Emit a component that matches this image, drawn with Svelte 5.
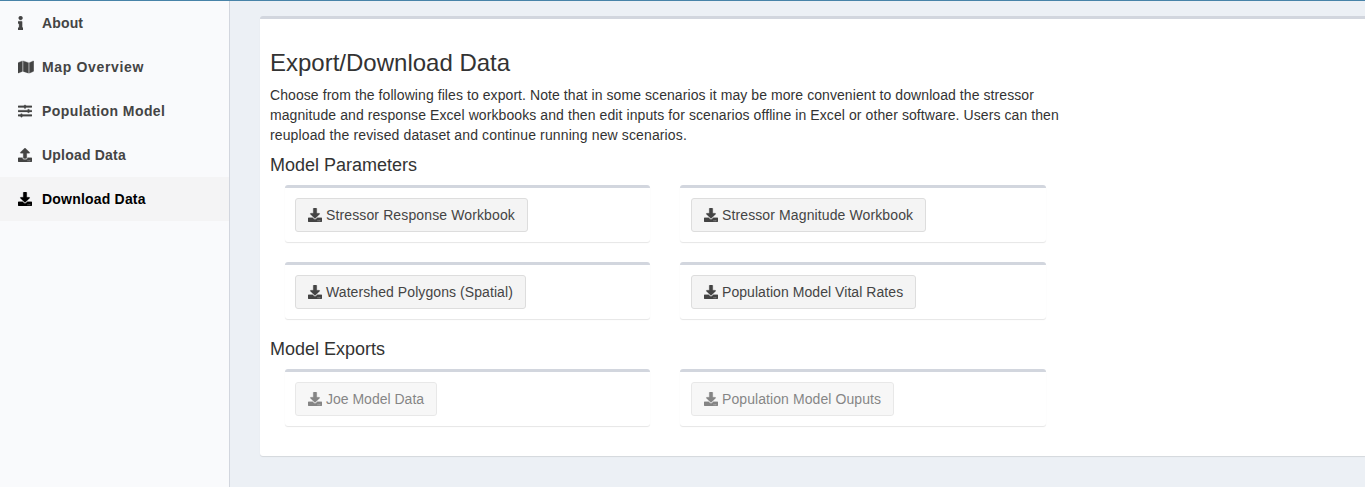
<script>
  const icons = {
    info: {
      w: 192,
      d: 'M20 424.229h20V279.771H20c-11.046 0-20-8.954-20-20V212c0-11.046 8.954-20 20-20h112c11.046 0 20 8.954 20 20v212.229h20c11.046 0 20 8.954 20 20V492c0 11.046-8.954 20-20 20H20c-11.046 0-20-8.954-20-20v-47.771c0-11.046 8.954-20 20-20zM96 0C56.235 0 24 32.235 24 72s32.235 72 72 72 72-32.235 72-72S135.764 0 96 0z'
    },
    map: {
      w: 576,
      d: 'M0 117.66v346.32c0 11.32 11.43 19.06 21.94 14.86L160 416V32L20.12 87.95A32.006 32.006 0 0 0 0 117.66zM192 416l192 64V96L192 32v384zM554.06 33.16L416 96v384l139.88-55.95A31.996 31.996 0 0 0 576 394.34V48.02c0-11.32-11.43-19.06-21.94-14.86z'
    },
    sliders: {
      w: 512,
      d: 'M496 384H160v-16c0-8.8-7.2-16-16-16h-32c-8.8 0-16 7.2-16 16v16H16c-8.8 0-16 7.2-16 16v32c0 8.8 7.2 16 16 16h80v16c0 8.8 7.2 16 16 16h32c8.8 0 16-7.2 16-16v-16h336c8.8 0 16-7.2 16-16v-32c0-8.8-7.2-16-16-16zm0-160h-80v-16c0-8.8-7.2-16-16-16h-32c-8.8 0-16 7.2-16 16v16H16c-8.8 0-16 7.2-16 16v32c0 8.8 7.2 16 16 16h336v16c0 8.8 7.2 16 16 16h32c8.8 0 16-7.2 16-16v-16h80c8.8 0 16-7.2 16-16v-32c0-8.8-7.2-16-16-16zm0-160H288V48c0-8.8-7.2-16-16-16h-32c-8.8 0-16 7.2-16 16v16H16C7.2 64 0 71.2 0 80v32c0 8.8 7.2 16 16 16h208v16c0 8.8 7.2 16 16 16h32c8.8 0 16-7.2 16-16v-16h208c8.8 0 16-7.2 16-16V80c0-8.8-7.2-16-16-16z'
    },
    upload: {
      w: 512,
      d: 'M296 384h-80c-13.3 0-24-10.7-24-24V192h-87.7c-17.8 0-26.7-21.5-14.1-34.1L242.3 5.7c7.5-7.5 19.8-7.5 27.3 0l152.2 152.2c12.6 12.6 3.7 34.1-14.1 34.1H320v168c0 13.3-10.7 24-24 24zm216-8v112c0 13.3-10.7 24-24 24H24c-13.3 0-24-10.7-24-24V376c0-13.3 10.7-24 24-24h136v8c0 30.9 25.1 56 56 56h80c30.9 0 56-25.1 56-56v-8h136c13.3 0 24 10.7 24 24zm-124 88c0-11-9-20-20-20s-20 9-20 20 9 20 20 20 20-9 20-20zm64 0c0-11-9-20-20-20s-20 9-20 20 9 20 20 20 20-9 20-20z'
    },
    download: {
      w: 512,
      d: 'M216 0h80c13.3 0 24 10.7 24 24v168h87.7c17.8 0 26.7 21.5 14.1 34.1L269.7 378.3c-7.5 7.5-19.8 7.5-27.3 0L90.1 226.1c-12.6-12.6-3.7-34.1 14.1-34.1H192V24c0-13.3 10.7-24 24-24zm296 376v112c0 13.3-10.7 24-24 24H24c-13.3 0-24-10.7-24-24V376c0-13.3 10.7-24 24-24h146.7l49 49c20.1 20.1 52.5 20.1 72.6 0l49-49H488c13.3 0 24 10.7 24 24zm-124 88c0-11-9-20-20-20s-20 9-20 20 9 20 20 20 20-9 20-20zm64 0c0-11-9-20-20-20s-20 9-20 20 9 20 20 20 20-9 20-20z'
    }
  };

  const menu = [
    { icon: 'info', label: 'About', tracking: 0.15 },
    { icon: 'map', label: 'Map Overview', tracking: 0.66 },
    { icon: 'sliders', label: 'Population Model', tracking: 0.42 },
    { icon: 'upload', label: 'Upload Data', tracking: 0.2 },
    { icon: 'download', label: 'Download Data', tracking: 0.2, active: true }
  ];

  const intro = [
    {
      text: 'Choose from the following files to export. Note that in some scenarios it may be more convenient to download the stressor',
      tracking: 0.075
    },
    {
      text: 'magnitude and response Excel workbooks and then edit inputs for scenarios offline in Excel or other software. Users can then',
      tracking: 0.088
    },
    { text: 'reupload the revised dataset and continue running new scenarios.', tracking: 0.13 }
  ];

  const sections = [
    {
      title: 'Model Parameters',
      files: [
        { name: 'Stressor Response Workbook', tracking: 0.125 },
        { name: 'Stressor Magnitude Workbook', tracking: 0.115 },
        { name: 'Watershed Polygons (Spatial)', tracking: 0.08 },
        { name: 'Population Model Vital Rates', tracking: 0.06 }
      ]
    },
    {
      title: 'Model Exports',
      disabled: true,
      files: [
        { name: 'Joe Model Data', tracking: 0 },
        { name: 'Population Model Ouputs', tracking: 0.08 }
      ]
    }
  ];
</script>

{#snippet icon(name)}
  <svg class="icon" viewBox="0 0 {icons[name].w} 512" width={(icons[name].w / 512) * 14} height="14" aria-hidden="true">
    <path d={icons[name].d} />
  </svg>
{/snippet}

<div class="page">
  <nav class="sidebar">
    {#each menu as item}
      <a class="item" class:active={item.active} href="#top">
        <span class="slot">{@render icon(item.icon)}</span>
        <span style:letter-spacing="{item.tracking}px">{item.label}</span>
      </a>
    {/each}
  </nav>

  <main class="content">
    <section class="panel">
      <div class="body">
        <h3>Export/Download Data</h3>
        <p>
          {#each intro as line}
            <span class="line" style:letter-spacing="{line.tracking}px">{line.text}</span>
          {/each}
        </p>
        {#each sections as section}
          <h4>{section.title}</h4>
          <div class="grid">
            {#each section.files as file}
              <div class="box">
                <button class="btn" disabled={section.disabled}>
                  {@render icon('download')}
                  <span style:letter-spacing="{file.tracking}px">{file.name}</span>
                </button>
              </div>
            {/each}
          </div>
        {/each}
      </div>
    </section>
  </main>
</div>

<style>
  :global(body) {
    margin: 0;
    overflow: hidden;
  }

  .page {
    box-sizing: border-box;
    display: flex;
    height: 487px;
    border-top: 1px solid #4783a8;
    background: #ecf0f5;
    color: #333;
    font-family: 'Liberation Sans', Arial, sans-serif;
    font-size: 14px;
    line-height: 20px;
    overflow: hidden;
  }

  .sidebar {
    flex: none;
    width: 229px;
    border-right: 1px solid #d2d6de;
    background: #f9fafc;
  }

  .item {
    display: flex;
    align-items: center;
    height: 44px;
    padding-left: 18px;
    color: #444;
    font-weight: 700;
    text-decoration: none;
    white-space: nowrap;
  }

  .item.active {
    background: #f4f4f5;
    color: #000;
  }

  .slot {
    display: flex;
    width: 24px;
  }

  .icon {
    display: block;
    flex: none;
    fill: currentColor;
    stroke: currentColor;
    stroke-width: 10px;
  }

  .content {
    flex: 1;
    min-width: 0;
    padding: 15px 0 0 30px;
  }

  .panel {
    box-sizing: border-box;
    height: 440px;
    padding: 10px;
    border-top: 3px solid #d2d6de;
    border-radius: 3px 0 0 3px;
    background: #fff;
    box-shadow: 0 1px 1px rgba(0, 0, 0, 0.1);
  }

  .body {
    width: 790px;
  }

  h3,
  h4 {
    margin: 0;
    font-weight: 400;
    line-height: 1.1;
  }

  h3 {
    padding: 21px 0 9px;
    font-size: 24px;
  }

  h4 {
    padding: 1px 0 9px;
    font-size: 18px;
  }

  p {
    margin: 0 0 10px;
    white-space: nowrap;
  }

  .line {
    display: block;
  }

  .grid {
    display: grid;
    grid-template-columns: 365px 366px;
    gap: 20px 30px;
    padding: 0 15px 20px;
  }

  .box {
    box-sizing: border-box;
    height: 57px;
    padding: 10px;
    border-top: 3px solid #d2d6de;
    border-radius: 3px;
    background: #fff;
    box-shadow: 0 1px 1px rgba(0, 0, 0, 0.1);
  }

  .box:nth-child(even) {
    padding-left: 11px;
  }

  .btn {
    box-sizing: border-box;
    display: flex;
    align-items: center;
    gap: 4px;
    height: 34px;
    padding: 0 12px;
    border: 1px solid #ddd;
    border-radius: 3px;
    background: #f4f4f4;
    color: #444;
    font: inherit;
    white-space: nowrap;
  }

  .btn:disabled {
    opacity: 0.65;
  }
</style>
